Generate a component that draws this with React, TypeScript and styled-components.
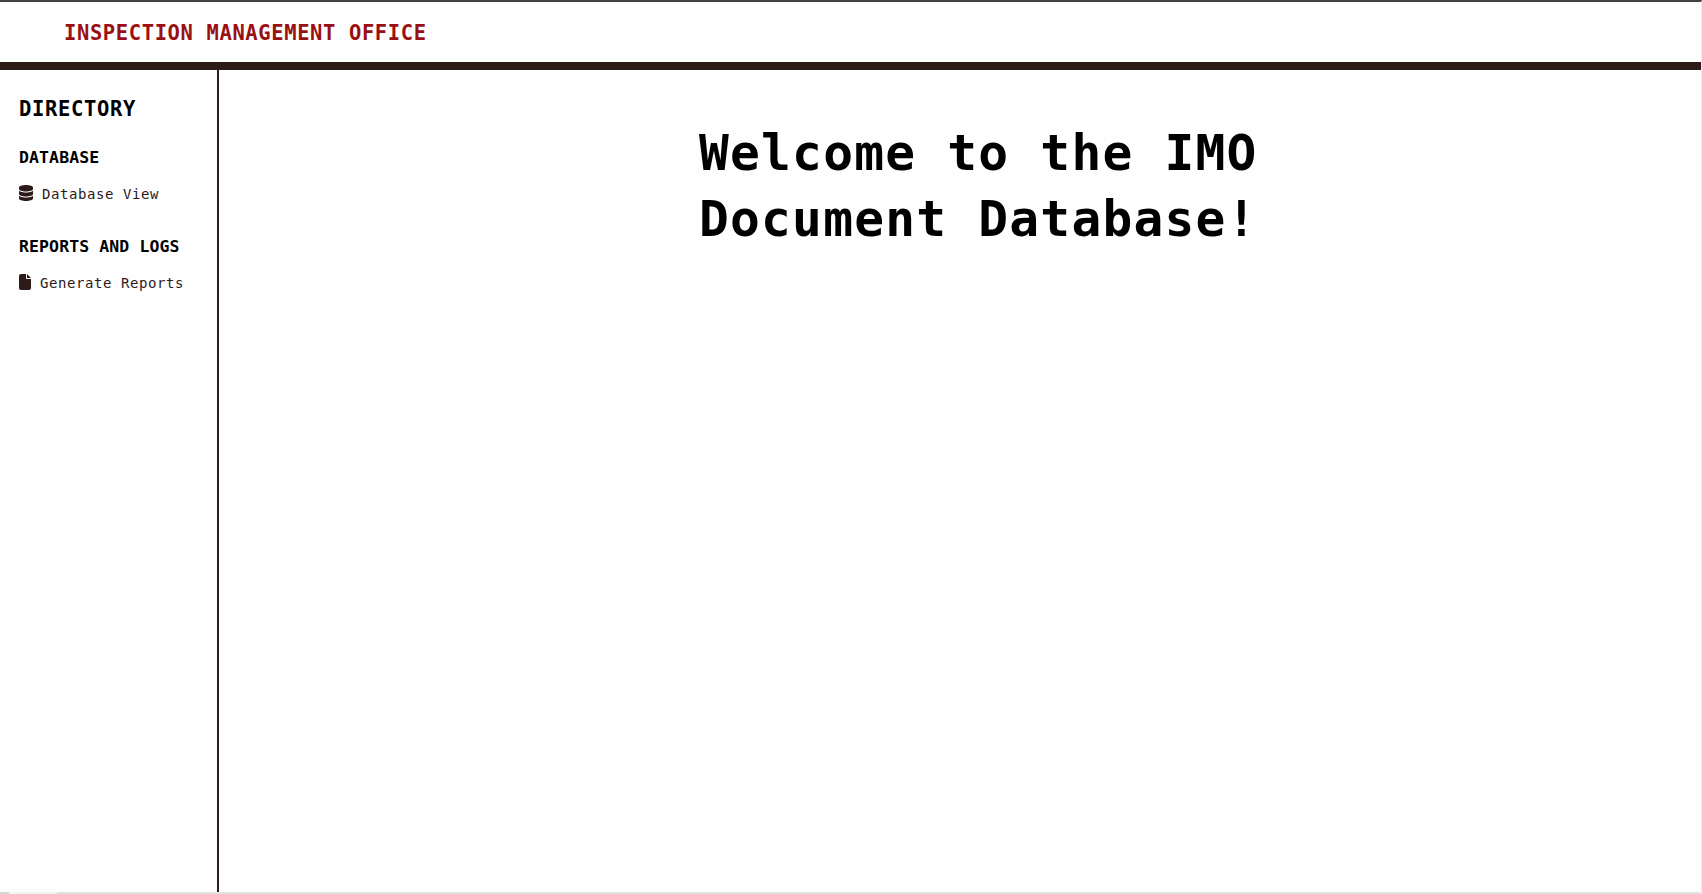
import React from "react";
import styled, { createGlobalStyle } from "styled-components";
import { FaDatabase, FaFile } from "react-icons/fa6";

const GlobalStyle = createGlobalStyle`
  * { box-sizing: border-box; }
  body { margin: 0; background: #fefefe; overflow: hidden; }
  h1, h2, h3, ul { margin: 0; padding: 0; }
`;

const Page = styled.div`
  display: flex;
  flex-direction: column;
  width: 100vw;
  height: 100vh;
  border-top: 2px solid #444143;
  border-right: 1px solid #eeeeee;
  font-family: "DejaVu Sans Mono", monospace;
  color: #000;
`;

const Header = styled.header`
  flex: none;
  height: 68px;
  padding: 17px 0 0 64px;
  border-bottom: 8px solid #2d1b1a;
`;

const Brand = styled.h1`
  font-size: 20.5px;
  line-height: 28px;
  letter-spacing: 0.61px;
  color: #9a1012;
`;

const Body = styled.div`
  display: flex;
  flex: 1;
  min-height: 0;
`;

const Sidebar = styled.nav`
  width: 219px;
  padding: 25px 0 0 19px;
  border-right: 2px solid #2d1b1a;
  white-space: nowrap;
`;

const DirectoryTitle = styled.h2`
  font-size: 20.5px;
  line-height: 28px;
  letter-spacing: 0.66px;
`;

const Section = styled.section<{ $top: number }>`
  margin-top: ${(p) => p.$top}px;
`;

const SectionTitle = styled.h3`
  font-size: 16.5px;
  line-height: 22px;
  letter-spacing: 0.1px;
`;

const NavLink = styled.a`
  display: flex;
  align-items: center;
  gap: 9px;
  height: 22px;
  margin-top: 13px;
  font-size: 14px;
  letter-spacing: 0.57px;
  color: #2d1b1a;
`;

const LinkIcon = styled.span<{ $width: number }>`
  flex: none;
  width: ${(p) => p.$width}px;
  height: 16px;
  svg { display: block; width: 100%; height: 100%; }
`;

const LinkText = styled.span`
  padding-top: 2px;
`;

const Main = styled.main`
  flex: 1;
  padding: 50px 0 0 480px;
`;

const Welcome = styled.h1`
  width: 570px;
  font-size: 49.5px;
  line-height: 66px;
  letter-spacing: 1.23px;
`;

const BottomEdge = styled.footer`
  flex: none;
  height: 2px;
  background: linear-gradient(to right, #d6d6d6 9px, #f3f3f3 9px 57px, #e1e1e1 57px);
`;

export default function App() {
  return (
    <>
      <GlobalStyle />
      <Page>
        <Header>
          <Brand>INSPECTION MANAGEMENT OFFICE</Brand>
        </Header>
        <Body>
          <Sidebar>
            <DirectoryTitle>DIRECTORY</DirectoryTitle>
            <Section $top={24}>
              <SectionTitle>DATABASE</SectionTitle>
              <NavLink>
                <LinkIcon $width={14}><FaDatabase /></LinkIcon>
                <LinkText>Database View</LinkText>
              </NavLink>
            </Section>
            <Section $top={32}>
              <SectionTitle>REPORTS AND LOGS</SectionTitle>
              <NavLink>
                <LinkIcon $width={12}><FaFile /></LinkIcon>
                <LinkText>Generate Reports</LinkText>
              </NavLink>
            </Section>
          </Sidebar>
          <Main>
            <Welcome>Welcome to the IMO Document Database!</Welcome>
          </Main>
        </Body>
        <BottomEdge />
      </Page>
    </>
  );
}
